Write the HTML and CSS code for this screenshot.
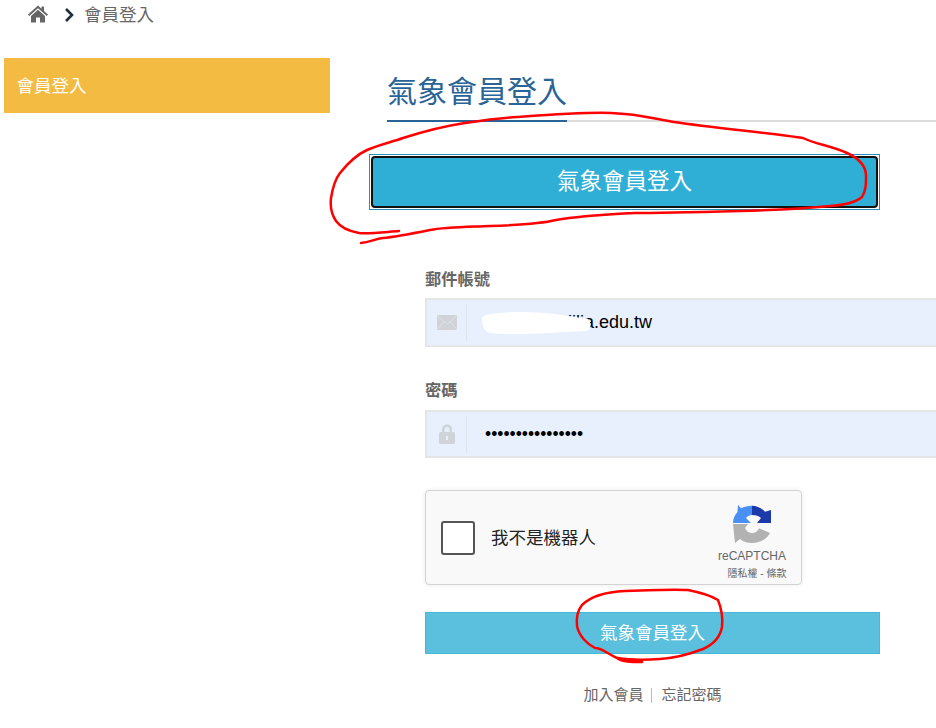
FILE: index.html
```html
<!DOCTYPE html>
<html lang="zh-Hant">
<head>
<meta charset="utf-8">
<title>會員登入</title>
<link rel="stylesheet" href="styles.css">
</head>
<body>
<nav class="crumbs">
  <svg class="home" viewBox="0 0 20 18" width="20" height="18"><path d="M10 0.5 L13.6 3.8 V1.6 H16 V6 L20 9.6 L18.8 11 L10 3.2 L1.2 11 L0 9.6 Z M10 4.8 L17 11 V17.5 H12 V12.5 H8 V17.5 H3 V11 Z"/></svg>
  <svg class="chev" viewBox="0 0 10 14" width="10" height="14"><path d="M2 1 L8 7 L2 13" fill="none" stroke-width="2.6"/></svg>
  <span>會員登入</span>
</nav>
<div class="layout">
  <aside class="side"><a class="side-item">會員登入</a></aside>
  <main class="main">
    <div class="heading"><h1>氣象會員登入</h1></div>
    <div class="tab-ring"><button class="tab">氣象會員登入</button></div>
    <form class="form">
      <label class="label">郵件帳號</label>
      <div class="field">
        <span class="addon">
          <svg viewBox="0 0 20 15" width="20" height="15"><rect class="ico" width="20" height="15" rx="1"/><path class="ico-line" d="M0.5 1 L10 9 L19.5 1 M0.5 14 L7 6.5 M19.5 14 L13 6.5"/></svg>
        </span>
        <input class="input" type="text" value="aaabcdefgiilia.edu.tw">
      </div>
      <label class="label">密碼</label>
      <div class="field field-b">
        <span class="addon">
          <svg viewBox="0 0 16 20" width="16" height="20"><path class="ico" fill-rule="evenodd" d="M3 8 V5.5 C3 2.5 5 0.5 8 0.5 C11 0.5 13 2.5 13 5.5 V8 H14.5 C15.3 8 16 8.7 16 9.5 V18.5 C16 19.3 15.3 20 14.5 20 H1.5 C0.7 20 0 19.3 0 18.5 V9.5 C0 8.7 0.7 8 1.5 8 Z M5.5 8 H10.5 V5.5 C10.5 4 9.5 3 8 3 C6.5 3 5.5 4 5.5 5.5 Z M7 12 V16 H9 V12 Z"/></svg>
        </span>
        <input class="input input-pw" type="password" value="abcdefghijklmnop">
      </div>
      <div class="captcha">
        <span class="check"></span>
        <span class="robot">我不是機器人</span>
        <div class="brand">
          <svg viewBox="0 0 38 38" width="38" height="38">
            <path fill="#b2b2b2" d="M0 19 H15 L12 23 C13 26 16 28 19 28 C22 28 25 26.500 26 23.300 L37 28 C34 34 27 38 19 38 C14 38 10 36.500 7 34 L2 38 Z"/>
            <path fill="#4a8ff4" d="M5 0 L8 3.300 C11 1.500 15 0.700 19 0.700 V10 C16.500 10 14.500 11 13 13 L18 18 H0 C0 14 1.500 10 4.500 7 Z"/>
            <path fill="#1c3aa9" d="M19 0.700 C24 0.700 28.500 3 32 6.700 L38 5 V18 H24 L28 13 C26 11 23 10 19 10 Z"/>
          </svg>
          <span class="brand-name">reCAPTCHA</span>
          <span class="brand-links">隱私權 - 條款</span>
        </div>
      </div>
      <button class="submit" type="button">氣象會員登入</button>
      <div class="links"><a>加入會員</a><i class="sep"></i><a>忘記密碼</a></div>
    </form>
  </main>
</div>
<svg class="marks" viewBox="0 0 936 728" width="936" height="728">
  <path class="blob" d="M483 316 C500 310 540 312 562 315 L588 319 C592 323 591 330 586 331 C560 332 520 336 490 333 C482 331 481 320 483 316 Z"/>
  <path class="ink" d="M399 231 C385 232 370 234 359 233 C348 231 341 228 336 221 C331 214 330 207 331 198 C333 186 336 178 340 173 C348 163 356 155 367 150 C378 145 392 142 403 138 C425 131 445 126 465 123 C485 120 500 118 517 117 C545 115 585 112 611 113 C640 114 655 119 674 122 C715 128 770 133 803 138 C815 144 832 146 847 153 C858 158 866 165 866 176 C866 185 866 190 862 197 C855 203 845 205 830 206 C800 209 775 210 740 211 C700 212 660 213 634 213 C600 215 580 216 556 220 C540 224 520 225 490 226 C465 227 445 227 430 230 C410 234 395 237 383 238 C375 239 370 242 361 243"/>
  <path class="ink" d="M642 662 C632 662 622 662 617 658 C608 654 602 648 595 648 C587 644 579 636 577 626 C576 616 578 610 582 605 C590 597 605 592 625 591 C650 590 675 589 688 590 C698 592 710 595 718 600 C722 610 723 618 722 627 C720 638 712 645 703 649 C690 654 675 658 660 659 C645 660 630 660 618 658"/>
</svg>
</body>
</html>
```
FILE: styles.css
```css
* { box-sizing: border-box; }
html, body { margin: 0; height: 728px; overflow: hidden; background: #fff; }
body {
  position: relative;
  font-family: "Liberation Sans", "Noto Sans CJK TC", sans-serif;
  color: #666;
}
.crumbs {
  height: 58px;
  padding: 4px 0 0 28px;
  display: flex;
  align-items: flex-start;
  font-size: 17.5px;
  line-height: 22px;
  color: #666;
}
.home { fill: #666; margin-top: 1px; }
.chev { stroke: #1f2d3d; margin: 4px 0 0 16px; }
.crumbs span { margin-left: 10px; }
.layout { display: flex; align-items: flex-start; }
.side { width: 326px; margin-left: 4px; flex: none; }
.side-item {
  display: block;
  height: 55px;
  padding: 0 12.5px;
  line-height: 57px;
  background: #f3bb41;
  color: #fff;
  font-size: 17.5px;
}
.main { padding-left: 39px; flex: none; width: 606px; }
.heading { margin-left: 18px; height: 64px; border-bottom: 2px solid #ddd; width: 549px; display: flex; }
.heading h1 {
  margin: 0;
  height: 64px;
  width: 180px;
  font-size: 30px;
  font-weight: 400;
  line-height: 68px;
  color: #2a6496;
  border-bottom: 2px solid #2a6496;
}
.tab-ring {
  width: 511px;
  height: 56px;
  margin-top: 32px;
  padding: 1px;
  border: 1px solid #2a8fb5;
  background: #fff;
}
.tab {
  display: block;
  width: 100%;
  height: 100%;
  border: 2px solid #111;
  border-radius: 4px;
  background: #2fafd6;
  color: #fff;
  font: inherit;
  font-size: 22.5px;
  padding: 0 0 6px;
}
.form { margin: 58px 0 0 56px; width: 540px; }
.label { display: block; font-size: 16.25px; font-weight: 700; line-height: 22px; color: #666; }
.field {
  display: flex;
  align-items: center;
  height: 49px;
  margin: 8px 0 32px;
  border: 2px solid #e5e5e8;
  background: #e8f0fe;
}
.field-b { height: 48px; margin: 9px 0 32px; }
.addon {
  flex: none;
  width: 40px;
  height: 37px;
  border-right: 1px solid #dfe3ea;
  display: flex;
  align-items: center;
  justify-content: center;
}
.ico { fill: #d0d3d8; }
.ico-line { fill: none; stroke: #e2e5ea; stroke-width: .8; }
.input {
  flex: 1;
  min-width: 0;
  height: 100%;
  border: 0;
  padding: 0 0 0 17px;
  background: transparent;
  color: #000;
  font-family: "Liberation Sans", sans-serif;
  font-size: 18px;
  outline: none;
}
.input-pw { font-size: 17.5px; padding-left: 18px; }
.captcha {
  display: flex;
  align-items: center;
  width: 377px;
  height: 95px;
  padding: 0 11px 0 15px;
  border: 1px solid #d3d3d3;
  border-radius: 4px;
  background: #f9f9f9;
  box-shadow: 0 0 5px rgba(0, 0, 0, .08);
}
.check {
  flex: none;
  width: 34px;
  height: 34px;
  border: 2px solid #555;
  border-radius: 3px;
  background: #fff;
}
.robot { margin: 0 0 2px 16px; font-size: 17.5px; color: #222; }
.brand {
  margin-left: auto;
  width: 76px;
  display: flex;
  flex-direction: column;
  align-items: center;
  padding-top: 10px;
}
.brand-name { font-size: 12px; line-height: 16px; margin-top: 5px; color: #666; }
.brand-links { font-size: 10px; line-height: 14px; margin: 3px 0 0 10px; color: #666; white-space: nowrap; }
.submit {
  display: block;
  width: 455px;
  height: 42px;
  margin-top: 27px;
  border: 1px solid #46b8da;
  background: #5bc0de;
  color: #fff;
  font: inherit;
  font-size: 17.5px;
  padding: 0 0 4px;
}
.links {
  width: 455px;
  margin-top: 31px;
  display: flex;
  justify-content: center;
  align-items: center;
  font-size: 15px;
  line-height: 20px;
  color: #666;
}
.sep { width: 1px; height: 15px; background: #bbb; margin: 0 10px 0 7px; }
.marks { position: absolute; left: 0; top: 0; pointer-events: none; }
.blob { fill: #fff; }
.ink { fill: none; stroke: #f00; stroke-width: 2.5; stroke-linecap: round; stroke-linejoin: round; }
```
